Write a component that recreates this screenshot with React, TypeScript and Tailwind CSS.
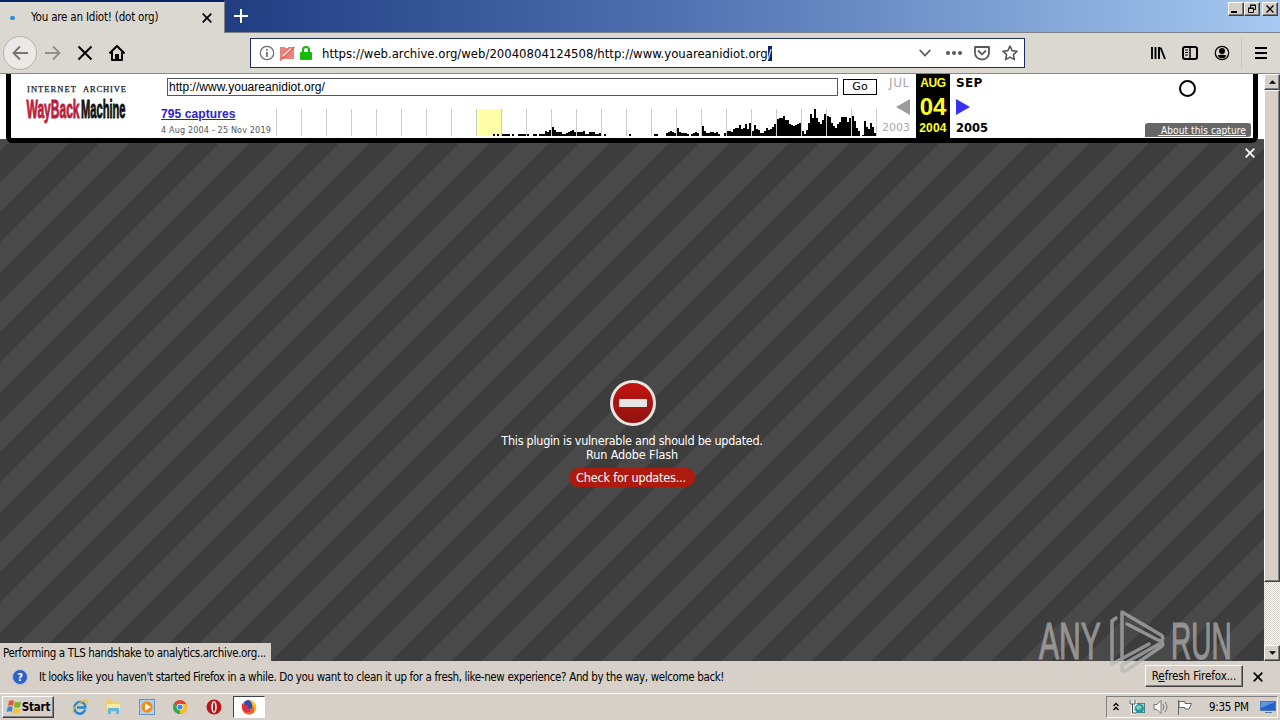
import type { ReactNode } from 'react';

// monthly capture counts, one row per year
const captures: number[][] = [
  [],
  [],
  [],
  [],
  [],
  [],
  [],
  [],
  [0, 0, 0, 0, 0, 0, 0, 0, 2, 0, 2, 0],
  [2, 2, 2, 2, 0, 2, 0, 0, 2, 2, 2, 2],
  [2, 0, 0, 2, 2, 0, 2, 2, 2, 5, 4, 6],
  [9, 6, 4, 4, 4, 2, 2, 3, 4, 5, 6, 4],
  [4, 4, 4, 5, 2, 2, 4, 4, 4, 2, 2, 3],
  [0, 2, 0, 0, 0, 0, 0, 0, 0, 0, 0, 0],
  [0, 2, 0, 0, 0, 0, 0, 0, 0, 0, 0, 0],
  [0, 2, 2, 0, 0, 0, 0, 3, 4, 5, 4, 3],
  [8, 4, 3, 3, 3, 2, 0, 2, 3, 4, 3, 0],
  [10, 5, 3, 3, 4, 4, 3, 4, 2, 0, 0, 3],
  [5, 5, 4, 7, 8, 8, 11, 7, 8, 12, 7, 13],
  [5, 11, 7, 6, 3, 3, 5, 8, 6, 7, 9, 12],
  [17, 18, 18, 20, 16, 16, 12, 11, 10, 11, 12, 13],
  [5, 2, 6, 13, 22, 18, 27, 18, 14, 12, 16, 22],
  [20, 19, 13, 10, 8, 12, 14, 19, 19, 19, 14, 18],
  [20, 15, 8, 5, 0, 1, 15, 9, 7, 13, 9, 3],
];

function Sparkline() {
  return (
    <div className="flex h-[27px] w-[601px] border-r border-[#ccc]">
      {captures.map((months, year) => (
        <div
          key={year}
          className={`flex w-[25px] shrink-0 items-end border-l border-[#ccc] ${year === 8 ? 'bg-[#ffffa5]' : ''}`}
        >
          {months.map((count, month) => (
            <i key={month} className="block w-[2px] bg-black" style={{ height: count }} />
          ))}
        </div>
      ))}
    </div>
  );
}

function WinButton({ children, className = '' }: { children: ReactNode; className?: string }) {
  return (
    <div
      className={`flex items-center justify-center border border-t-white border-r-[#404040] border-b-[#404040] border-l-white bg-[#d6d0c8] shadow-[inset_-1px_-1px_0_#808080] ${className}`}
    >
      {children}
    </div>
  );
}

function Cross({ className = '' }: { className?: string }) {
  return (
    <svg viewBox="0 0 10 10" className={className} fill="none" stroke="currentColor" strokeWidth="1.7">
      <path d="M.7.7l8.6 8.6M9.3.7L.7 9.3" />
    </svg>
  );
}

function TitleBar() {
  return (
    <div className="flex h-[33px] justify-between border-b border-[#7f8187] bg-linear-to-r from-[#0a246a] via-[#4c6cac] to-[#a6caf0]">
      <div className="flex">
        <div className="-mb-px flex h-[33px] w-[225px] items-center border-t-2 border-r border-t-[#0a246a] border-r-[#808080] bg-[#dbd8d2]">
          <i className="ml-[10px] block h-1 w-[5px] rounded-full bg-[#2e8ae6]" />
          <span className="ml-[16px] w-[128px] text-[11.5px] tracking-[-0.2px] whitespace-nowrap">
            You are an Idiot! (dot org)
          </span>
          <Cross className="ml-[43px] size-[10px]" />
        </div>
        <svg viewBox="0 0 14 14" className="mt-[9px] ml-[9px] size-[14px]" stroke="#fff" strokeWidth="2">
          <path d="M7 0v14M0 7h14" />
        </svg>
      </div>
      <div className="mt-[2px] mr-[2px] flex">
        <WinButton className="h-[14px] w-[16px]">
          <i className="mt-[6px] mr-1 block h-[2px] w-[6px] bg-black" />
        </WinButton>
        <WinButton className="h-[14px] w-[16px]">
          <svg viewBox="0 0 10 10" className="size-[10px]" fill="none" stroke="#000">
            <path d="M3.5 4V1.5h5v4H6.5M3 1h6M1.5 4.5h5v4h-5zM1 4h6" />
          </svg>
        </WinButton>
        <WinButton className="ml-[2px] h-[14px] w-[16px]">
          <Cross className="size-2" />
        </WinButton>
      </div>
    </div>
  );
}

function NavBar() {
  return (
    <div className="flex h-[41px] items-center border-b border-[#8a8883] bg-[#dbd8d2]">
      <div className="ml-[3px] flex size-[34px] items-center justify-center rounded-full border border-[#b5b2ad] bg-[#ebe9e6]">
        <svg viewBox="0 0 16 16" className="size-4" fill="none" stroke="#777571" strokeWidth="1.9">
          <path d="M16 8H1.5M8 1.5L1.5 8 8 14.5" />
        </svg>
      </div>
      <svg viewBox="0 0 16 16" className="ml-2 size-4" fill="none" stroke="#92908c" strokeWidth="1.9">
        <path d="M0 8h14.5M8 1.5L14.5 8 8 14.5" />
      </svg>
      <svg viewBox="0 0 16 16" className="ml-4 size-4" fill="none" stroke="#000" strokeWidth="2">
        <path d="M1.5 1.5l13 13M14.5 1.5l-13 13" />
      </svg>
      <svg viewBox="0 0 16 16" className="ml-4 size-4" fill="none" stroke="#000" strokeWidth="2">
        <path d="M.5 8.5L8 1l7.5 7.5M3 7v8h10V7" strokeLinejoin="round" />
        <path d="M6 9h4v6H6z" fill="#000" stroke="none" />
      </svg>

      <div className="ml-[125px] flex h-[30px] w-[775px] items-center border border-[#1c2b62] bg-white">
        <svg viewBox="0 0 16 16" className="ml-2 size-4" fill="none" stroke="#6b6b6b">
          <circle cx="8" cy="8" r="6.7" strokeWidth="1.2" />
          <path d="M8 7v5M8 4v1.7" strokeWidth="1.7" />
        </svg>
        <svg viewBox="0 0 16 16" className="ml-1 size-4">
          <path d="M1 2h5v1h3V2h6v12H1z" fill="#e9827b" />
          <path d="M4 11.500L12.500 4" stroke="#fff" strokeWidth="1.8" />
          <path d="M1 15.500L15.500 2" stroke="#e05f57" strokeWidth="1.3" />
        </svg>
        <svg viewBox="0 0 14 16" className="ml-[4px] h-4 w-[14px]">
          <path d="M4 8V5a3 3 0 016 0v3" fill="none" stroke="#12bc00" strokeWidth="2" />
          <rect x="1" y="7" width="12" height="8" rx="1" fill="#12bc00" />
        </svg>
        <span className="mt-px ml-[9px] w-[449px] text-[13px] leading-[16px] tracking-[-0.01px] whitespace-nowrap">
          https://web.archive.org/web/20040804124508/http://www.youareanidiot.org
          <span className="bg-[#0a246a] text-white">/</span>
        </span>
        <svg viewBox="0 0 12 8" className="ml-[148px] h-2 w-3" fill="none" stroke="#58585a" strokeWidth="1.8">
          <path d="M.7 1L6 6.5 11.3 1" />
        </svg>
        <svg viewBox="0 0 16 4" className="ml-[15px] h-1 w-4" fill="#58585a">
          <circle cx="2" cy="2" r="2" />
          <circle cx="8" cy="2" r="2" />
          <circle cx="14" cy="2" r="2" />
        </svg>
        <svg viewBox="0 0 16 16" className="ml-3 size-4" fill="none" stroke="#58585a" strokeWidth="1.8">
          <path d="M1 2h14v6a7 6.5 0 01-14 0z" strokeLinejoin="round" />
          <path d="M4.5 6L8 9.3 11.5 6" strokeLinecap="round" />
        </svg>
        <svg viewBox="0 0 16 16" className="ml-3 size-4" fill="none" stroke="#58585a" strokeWidth="1.6">
          <path
            d="M8 1l2.1 4.6 5 .6-3.7 3.4 1 5L8 12.1l-4.4 2.5 1-5L.9 6.2l5-.6z"
            strokeLinejoin="round"
          />
        </svg>
      </div>

      <svg viewBox="0 0 16 16" className="ml-[125px] size-4" fill="none" stroke="#000" strokeWidth="1.9">
        <path d="M2 2v12M5.5 2v12M9 2v12M10.5 2.5L15 14" />
      </svg>
      <svg viewBox="0 0 16 16" className="ml-4 size-4" fill="none" stroke="#000" strokeWidth="2">
        <rect x="1" y="2" width="14" height="12" rx="2" />
        <path d="M8 2v12" strokeWidth="1.5" />
        <path d="M3 5h3M3 7.5h3M3 10h3" strokeWidth="1" />
      </svg>
      <svg viewBox="0 0 16 16" className="ml-4 size-4">
        <circle cx="8" cy="8" r="6.7" fill="none" stroke="#000" strokeWidth="1.2" />
        <circle cx="8" cy="6" r="3" />
        <path d="M3.5 10.5c2-1 7-1 9 0a5 5 0 01-9 0z" />
      </svg>
      <i className="ml-[11px] block h-[30px] w-px bg-[#c6c3bd]" />
      <svg viewBox="0 0 12 12" className="ml-[13px] size-3" stroke="#000" strokeWidth="2">
        <path d="M0 1h12M0 6h12M0 11h12" />
      </svg>
    </div>
  );
}

function WaybackBar() {
  return (
    <div className="absolute top-0 left-[6px] flex h-[69px] w-[1252px] rounded-b-[6px] border-x-[5px] border-b-[5px] border-black bg-white font-['Liberation_Sans',sans-serif]">
      <svg viewBox="0 0 104 44" className="mt-[10px] ml-[14px] h-11 w-[104px]">
        <g fontFamily="Liberation Serif, serif" fontSize="8.5" fill="#222" stroke="#222" strokeWidth=".25">
          <text x="2" y="8" textLength="49">INTERNET</text>
          <text x="58" y="8" textLength="43">ARCHIVE</text>
        </g>
        <g fontFamily="Liberation Sans, sans-serif" fontWeight="700" fontSize="26">
          <text
            transform="translate(1.5 34) scale(.5 1)"
            textLength="106"
            lengthAdjust="spacingAndGlyphs"
            fill="#b8203c"
            stroke="#b8203c"
          >
            WayBack
          </text>
          <text
            transform="translate(56 34) scale(.5 1)"
            textLength="89"
            lengthAdjust="spacingAndGlyphs"
            fill="#111"
            stroke="#111"
          >
            Machine
          </text>
        </g>
      </svg>

      <div className="ml-[32px] w-[716px]">
        <div className="mt-[4px] ml-[6px] flex items-center">
          <div className="h-[18px] w-[671px] border border-[#55555c] pl-px text-[12px] leading-[16px] tracking-[0.04px]">
            http://www.youareanidiot.org/
          </div>
          <div className="ml-[5px] h-4 w-[34px] border border-black text-center font-['DejaVu_Sans',sans-serif] text-[11px] leading-[14px]">
            Go
          </div>
        </div>
        <div className="mt-[13px] flex">
          <div className="w-[115px] whitespace-nowrap">
            <div className="-mt-[3px] text-[12px] leading-[16px] font-bold tracking-[0.1px] text-[#2b22cf] underline">
              795 captures
            </div>
            <div className="mt-[1px] font-['DejaVu_Sans_Condensed','DejaVu_Sans',sans-serif] text-[9px] leading-[14px] tracking-[0.14px] text-[#555]">
              4 Aug 2004 - 25 Nov 2019
            </div>
          </div>
          <Sparkline />
        </div>
      </div>

      <div className="flex w-[112px] text-[12px] leading-[15px]">
        <div className="flex w-[33px] flex-col items-end text-[#a9a9a9]">
          <span className="mt-[2px] font-['DejaVu_Sans',sans-serif] tracking-[0.7px]">JUL</span>
          <svg viewBox="0 0 14 16" className="mt-2 h-4 w-[14px]" fill="#9b9b9e">
            <path d="M14 0v16L0 8z" />
          </svg>
          <span className="mt-[5px] font-['DejaVu_Sans',sans-serif] text-[11px]">2003</span>
        </div>
        <div className="ml-[6px] flex w-[34px] shrink-0 flex-col items-center bg-black font-bold text-[#ffff1f]">
          <span className="mt-[2px] text-[12px] tracking-[-0.4px]">AUG</span>
          <span className="mt-[3px] text-[24px] leading-[26px]">04</span>
          <span className="mt-[1px] tracking-[0.2px]">2004</span>
        </div>
        <div className="ml-[6px] flex flex-col font-['DejaVu_Sans',sans-serif] font-bold">
          <span className="mt-[2px] text-[12px] tracking-[0.3px]">SEP</span>
          <svg viewBox="0 0 14 16" className="mt-2 h-4 w-[14px]" fill="#3632ee">
            <path d="M0 0v16l14-8z" />
          </svg>
          <span className="mt-[6px] text-[11.5px]">2005</span>
        </div>
      </div>

      <div className="ml-auto flex w-[108px] flex-col">
        <i className="mt-[6px] ml-[34px] block size-[17px] rounded-full border-2 border-black" />
        <div className="mt-auto mb-px h-[14px] w-[106px] rounded-t-[3px] rounded-br-[3px] bg-[#666] pr-[5px] text-right font-['DejaVu_Sans_Condensed','DejaVu_Sans',sans-serif] text-[10px] leading-[15px] tracking-[0.1px] whitespace-nowrap text-white">
          <span className="underline">&nbsp;About this capture</span>
        </div>
      </div>
    </div>
  );
}

function BlockedPlugin() {
  return (
    <div className="relative flex h-full flex-col items-center bg-[repeating-linear-gradient(135deg,#494949_0,#494949_9.19px,#3d3d3d_9.19px,#3d3d3d_30.41px,#494949_30.41px,#494949_42.43px)] text-[12.5px] leading-[14px] text-white">
      <Cross className="absolute top-[9px] right-[9px] size-[10px]" />
      <svg viewBox="0 0 46 46" className="mt-[241px] ml-[2px] size-[46px]">
        <defs>
          <linearGradient id="stop" x2="0" y2="1">
            <stop stopColor="#c51512" />
            <stop offset="1" stopColor="#8d130d" />
          </linearGradient>
        </defs>
        <circle cx="23" cy="23" r="21.5" fill="url(#stop)" stroke="#e9e5e1" strokeWidth="3" />
        <rect x="9" y="19" width="28" height="8" rx="1" fill="#e6e6e6" />
      </svg>
      <p className="mt-[8px] tracking-[-0.27px] whitespace-nowrap">This plugin is vulnerable and should be updated.</p>
      <p className="tracking-[-0.12px]">Run Adobe Flash</p>
      <div className="mt-[6px] h-[19px] rounded-full bg-[#ae1a0e] pr-[9px] pl-[7px] leading-[19px] tracking-[-0.18px]">
        Check for updates...
      </div>
    </div>
  );
}

function ScrollBar() {
  return (
    <div className="flex w-4 flex-col bg-[repeating-conic-gradient(#fff_0_25%,#d6d0c8_0_50%)] bg-[length:2px_2px]">
      <WinButton className="h-4 w-4">
        <svg viewBox="0 0 8 4" className="h-1 w-[7px]">
          <path d="M0 4l4-4 4 4z" />
        </svg>
      </WinButton>
      <WinButton className="h-[492px] w-4">{null}</WinButton>
      <WinButton className="mt-auto h-4 w-4">
        <svg viewBox="0 0 8 4" className="h-1 w-[7px]">
          <path d="M0 0l4 4 4-4z" />
        </svg>
      </WinButton>
    </div>
  );
}

function Watermark() {
  return (
    <svg viewBox="0 0 200 70" className="absolute top-[606px] left-[1036px] h-[70px] w-[200px] opacity-70">
      <g
        fill="#b5b5b5"
        stroke="#b5b5b5"
        strokeWidth="1.2"
        fontFamily="Liberation Sans, sans-serif"
        fontSize="51"
      >
        <text transform="translate(3 53) scale(.6 1)" textLength="103" lengthAdjust="spacingAndGlyphs">
          ANY
        </text>
        <text transform="translate(135 53) scale(.6 1)" textLength="101" lengthAdjust="spacingAndGlyphs">
          RUN
        </text>
      </g>
      <g fill="none" stroke="#b5b5b5" strokeWidth="3.5" strokeLinecap="round" strokeLinejoin="round">
        <path d="M86 54V6l39 23q3 2 1 5-2 1-4 0L91 18" />
        <path d="M80 12l-4 3v43l37-20" />
        <path d="M123 38L86 59v5q2 2 5 0l35-24q2-2-1-5" />
      </g>
    </svg>
  );
}

function NotificationBar() {
  return (
    <div className="flex h-[32px] items-center bg-[#d6d0c8] text-[11.5px]">
      <svg viewBox="0 0 16 16" className="ml-3 size-4">
        <circle cx="8" cy="8" r="7.5" fill="#2e62c9" stroke="#b4c5e8" />
        <text x="8" y="12" textAnchor="middle" fontSize="11" fontWeight="700" fill="#fff">
          ?
        </text>
      </svg>
      <span className="mt-px ml-[11px] w-[686px] tracking-[-0.36px] whitespace-nowrap">
        It looks like you haven't started Firefox in a while. Do you want to clean it up for a fresh, like-new
        experience? And by the way, welcome back!
      </span>
      <WinButton className="-mt-[2px] ml-auto h-[22px] w-[98px] tracking-[-0.1px] whitespace-nowrap">
        <span className="mt-px">
          R<u>e</u>fresh Firefox...
        </span>
      </WinButton>
      <Cross className="mr-[17px] ml-[10px] size-[10px]" />
    </div>
  );
}

function TaskBar() {
  return (
    <div className="flex h-[27px] items-center border-t border-white bg-[#d6d0c8]">
      <WinButton className="ml-[2px] h-[22px] w-[52px] text-[11.5px] font-bold tracking-[-0.2px]">
        <svg viewBox="0 0 16 16" className="size-4 shrink-0">
          <path d="M3 2q3-1.5 5 0L7 7q-2-1.3-5 0z" fill="#e8572b" />
          <path d="M9 2.5q3 1.3 6 0L14 8q-3 1-6 0z" fill="#77b52b" />
          <path d="M1.7 8q3-1.5 5 0l-1 5q-2-1.3-5 0z" fill="#3d83d6" />
          <path d="M7.7 9q3 1.3 6 0l-1 5q-3 1-6 0z" fill="#f5c52d" />
        </svg>
        <span className="mt-px">Start</span>
      </WinButton>

      <svg viewBox="0 0 16 16" className="ml-[18px] size-4">
        <path
          d="M13 10.5A5.3 5.3 0 112.7 8 5.3 5.3 0 0113.3 8.5H5"
          fill="none"
          stroke="#2288d8"
          strokeWidth="2.5"
        />
        <path d="M1.5 14C-1 10 10 .5 14.5 1.5q1.5 1-.5 4" fill="none" stroke="#edbd35" strokeWidth="1.3" />
      </svg>
      <svg viewBox="0 0 16 16" className="ml-[17px] size-4">
        <path d="M1 1h5l1 2h8v10H1z" fill="#e9cf70" />
        <path d="M2 5h13v6H2z" fill="#f8eaa5" />
        <path d="M3 15V9h11v6h-3v-3H6v3z" fill="#65b5df" />
      </svg>
      <svg viewBox="0 0 16 16" className="ml-[18px] size-4">
        <rect x=".5" y=".5" width="15" height="15" fill="#acd0ee" stroke="#6294c4" />
        <circle cx="8" cy="8" r="5.7" fill="#f38b18" />
        <path d="M6 4.5v7L12 8z" fill="#fff" />
      </svg>
      <svg viewBox="0 0 16 16" className="ml-[18px] size-[14px]">
        <circle cx="8" cy="8" r="8" fill="#e24335" />
        <path d="M8 8L1.1 4A8 8 0 008 16z" fill="#36a852" />
        <path d="M8 8h8a8 8 0 01-8 8z" fill="#fbc116" />
        <path d="M8 4.5h7.2L16 8H8z" fill="#fbc116" />
        <circle cx="8" cy="8" r="3.8" fill="#fff" />
        <circle cx="8" cy="8" r="2.9" fill="#4285f4" />
      </svg>
      <svg viewBox="0 0 16 16" className="ml-[19px] size-4">
        <circle cx="8" cy="8" r="7.5" fill="#b8171c" />
        <ellipse cx="8" cy="8" rx="2.8" ry="6" fill="#eee" />
        <ellipse cx="8" cy="8" rx="1" ry="4.7" fill="#a01418" />
      </svg>
      <div className="ml-[11px] flex h-[22px] w-[32px] items-center justify-center border border-t-[#404040] border-r-white border-b-white border-l-[#404040] bg-white">
        <svg viewBox="0 0 16 16" className="size-4">
          <circle cx="8" cy="8.5" r="7.2" fill="#f36b21" />
          <path d="M8 1c5 0 7 4 7 7s-1 4-2 5q1-6-3-8z" fill="#ffc328" />
          <path d="M3 3q2-2 5-2c1 1 4 3 3 7-1 3-5 3-6 0H4z" fill="#2f4fae" />
          <path d="M1 4q1 2 4 2l3 2q-2 0-2 2 3 2 5 0-2 5-7 3-4-3-3-9z" fill="#e22c45" />
        </svg>
      </div>

      <div className="mr-[2px] ml-auto flex h-[22px] w-[172px] items-center border border-t-[#808080] border-r-white border-b-white border-l-[#808080]">
        <svg viewBox="0 0 6 9" className="mb-[2px] ml-[6px] h-[9px] w-[6px]" fill="none" stroke="#000" strokeWidth="1.3">
          <path d="M.5 4L3 1.5 5.500 4M.5 8L3 5.5 5.500 8" />
        </svg>
        <svg viewBox="0 0 16 16" className="ml-[10px] size-4">
          <rect x="4.5" y="4.5" width="11" height="9" fill="#9ddde3" stroke="#527b86" />
          <circle cx="10.5" cy="9.5" r="4.5" fill="#279aa0" />
          <path d="M7 8q3-3 6 0-3 4-5 2z" fill="#7fd6b8" />
          <path d="M1 1v4h5V1M3.5 5v9H7" fill="none" stroke="#fff" strokeWidth="3" />
          <path d="M1 1v4h5V1M3.5 5v9H7" fill="none" stroke="#444" />
        </svg>
        <svg viewBox="0 0 16 16" className="ml-[8px] size-4" fill="#fff" stroke="#777">
          <path d="M1 5.5h3l4-4v13l-4-4H1z" />
          <path d="M10 5q2 3 0 6M12 3q4 5 0 10" fill="none" />
        </svg>
        <svg viewBox="0 0 16 16" className="ml-[8px] size-4" fill="#fff" stroke="#666">
          <path d="M1.5 1v15M2 2.5h6v2h6.5L12 10H8V8.5H2z" />
        </svg>
        <span className="mt-px ml-[16px] w-[40px] text-[11.5px] tracking-[-0.3px] whitespace-nowrap">9:35 PM</span>
        <svg viewBox="0 0 16 16" className="ml-[11px] size-4">
          <rect x=".5" y="2.5" width="15" height="9" fill="#2463c6" stroke="#4c7ab9" />
          <path d="M1 3h14L1 9z" fill="#5b97e2" />
          <path d="M5 13h7v1H5z" fill="#5678a0" />
        </svg>
      </div>
    </div>
  );
}

export default function App() {
  return (
    <div className="relative flex h-[720px] w-[1280px] flex-col overflow-hidden font-['DejaVu_Sans_Condensed','DejaVu_Sans',sans-serif] text-black">
      <TitleBar />
      <NavBar />
      <div className="flex h-[587px]">
        <div className="relative w-[1264px] bg-white pt-[65px]">
          <BlockedPlugin />
          <WaybackBar />
          <div className="absolute bottom-0 left-0 h-[18px] w-[271px] bg-[#d6d0c8] pl-[3px] text-[11.5px] leading-[20px] tracking-[-0.36px] whitespace-nowrap">
            Performing a TLS handshake to analytics.archive.org...
          </div>
        </div>
        <ScrollBar />
      </div>
      <NotificationBar />
      <TaskBar />
      <Watermark />
    </div>
  );
}
